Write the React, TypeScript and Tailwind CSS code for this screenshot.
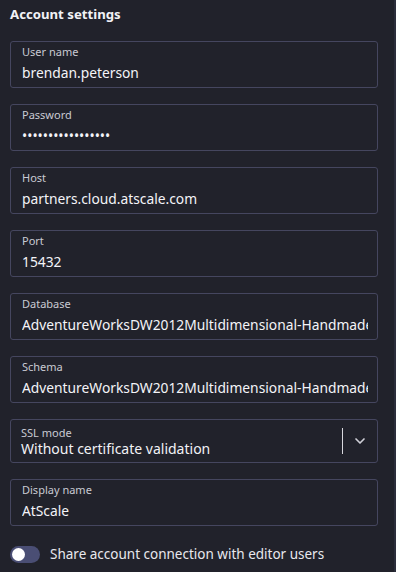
import { ChevronDown } from "lucide-react";

const fields = [
  { label: "User name", value: "brendan.peterson" },
  { label: "Password", value: "•••••••••••••••••" },
  { label: "Host", value: "partners.cloud.atscale.com" },
  { label: "Port", value: "15432" },
  { label: "Database", value: "AdventureWorksDW2012Multidimensional-Handmade" },
  { label: "Schema", value: "AdventureWorksDW2012Multidimensional-Handmade" },
];

function Field({ label, value }: { label: string; value: string }) {
  return (
    <div className="w-[368px] h-[47px] rounded-[3px] border border-[#45465f] pl-[11px] pr-[9px] pt-[3px] overflow-hidden">
      <div className="text-[11px] leading-[14px] text-[#c9cad3]">{label}</div>
      <div className="mt-[5px] whitespace-nowrap overflow-hidden text-[13.8px] leading-[18px] text-[#f4f4f8]">
        {value}
      </div>
    </div>
  );
}

export default function App() {
  return (
    <div
      className="w-[396px] h-[572px] bg-[#21222b] flex overflow-hidden"
      style={{ fontFamily: '"Noto Sans", "Open Sans", sans-serif' }}
    >
      <div className="w-[394px] shrink-0 pl-[10px]">
        <h1 className="pt-[4px] text-[13.2px] leading-[20px] font-bold text-[#f2f2f6]">Account settings</h1>
        <div className="mt-[17px] flex flex-col gap-[16px]">
          {fields.map((f) => (
            <Field key={f.label} {...f} />
          ))}
          <div className="w-[368px] h-[44px] rounded-[3px] border border-[#45465f] flex items-center">
            <div className="flex-1 pl-[10px] pt-[1px]">
              <div className="text-[11px] leading-[14px] text-[#c9cad3]">SSL mode</div>
              <div className="text-[14px] leading-[18px] text-[#f2f2f6]">Without certificate validation</div>
            </div>
            <div className="w-px h-[26px] bg-[#d8d8de]" />
            <div className="w-[34px] flex justify-center">
              <ChevronDown size={16} strokeWidth={2.5} className="text-[#d0d0d8]" />
            </div>
          </div>
          <Field label="Display name" value="AtScale" />
        </div>
        <div className="mt-[18px] flex items-center gap-[10px]">
          <div className="w-[30px] h-[17px] rounded-full bg-[#4a4e74] flex items-center px-[2px]">
            <div className="w-[13px] h-[13px] rounded-full bg-white" />
          </div>
          <span className="text-[13.5px] text-[#e8e8ee]">Share account connection with editor users</span>
        </div>
      </div>
      <div className="w-[2px] shrink-0 bg-[#2b2d3b]" />
    </div>
  );
}
